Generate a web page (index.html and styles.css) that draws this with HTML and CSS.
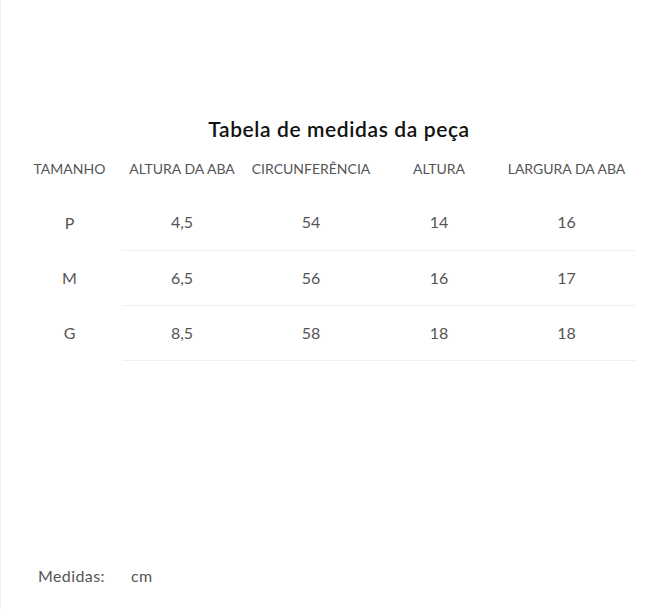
FILE: index.html
```html
<!DOCTYPE html>
<html lang="pt-BR">
<head>
<meta charset="utf-8">
<title>Tabela de medidas</title>
<link rel="stylesheet" href="styles.css">
</head>
<body>
<div class="page">
  <h2 class="title">Tabela de medidas da peça</h2>
  <table class="sizes">
    <colgroup>
      <col class="c1"><col class="c2"><col class="c3"><col class="c4"><col class="c5">
    </colgroup>
    <thead>
      <tr>
        <th>TAMANHO</th>
        <th>ALTURA DA ABA</th>
        <th>CIRCUNFERÊNCIA</th>
        <th>ALTURA</th>
        <th>LARGURA DA ABA</th>
      </tr>
    </thead>
    <tbody>
      <tr><th>P</th><td>4,5</td><td>54</td><td>14</td><td>16</td></tr>
      <tr><th>M</th><td>6,5</td><td>56</td><td>16</td><td>17</td></tr>
      <tr><th>G</th><td>8,5</td><td>58</td><td>18</td><td>18</td></tr>
    </tbody>
  </table>
  <div class="units">
    <span class="units-label">Medidas:</span>
    <span class="units-value">cm</span>
  </div>
</div>
</body>
</html>
```

FILE: styles.css
```css
html, body {
  margin: 0;
  padding: 0;
  background: #fff;
}

body {
  font-family: "Lato", "Liberation Sans", sans-serif;
  color: #555;
}

.page {
  box-sizing: border-box;
  height: 609px;
  border-left: 1px solid #f0f0f0;
  padding-top: 116px;
  display: flex;
  flex-direction: column;
}

.title {
  margin: 0;
  padding-left: 5px;
  text-align: center;
  font-size: 21px;
  line-height: 26px;
  font-weight: 600;
  color: #111;
  letter-spacing: 0.6px;
}

.sizes {
  margin: 8px 0 0 16px;
  border-collapse: collapse;
  table-layout: fixed;
  width: 618px;
}

.c1 { width: 105px; }
.c2 { width: 120px; }
.c3 { width: 138px; }
.c4 { width: 118px; }
.c5 { width: 137px; }

.sizes thead th {
  font-weight: 400;
  font-size: 14px;
  line-height: 20px;
  padding: 9px 0 16px;
  text-align: center;
  color: #555;
  white-space: nowrap;
}

.sizes tbody th,
.sizes tbody td {
  font-weight: 400;
  font-size: 16px;
  line-height: 20px;
  height: 55px;
  padding: 0;
  box-sizing: border-box;
  text-align: center;
  vertical-align: middle;
  color: #555;
}

.sizes tbody td {
  border-bottom: 1px solid #efefef;
}

.units {
  margin-top: auto;
  margin-bottom: 23px;
  padding-left: 37px;
  display: flex;
  gap: 26px;
  font-size: 16px;
  font-weight: 400;
  letter-spacing: 0.4px;
  line-height: 20px;
  color: #555;
}
```
